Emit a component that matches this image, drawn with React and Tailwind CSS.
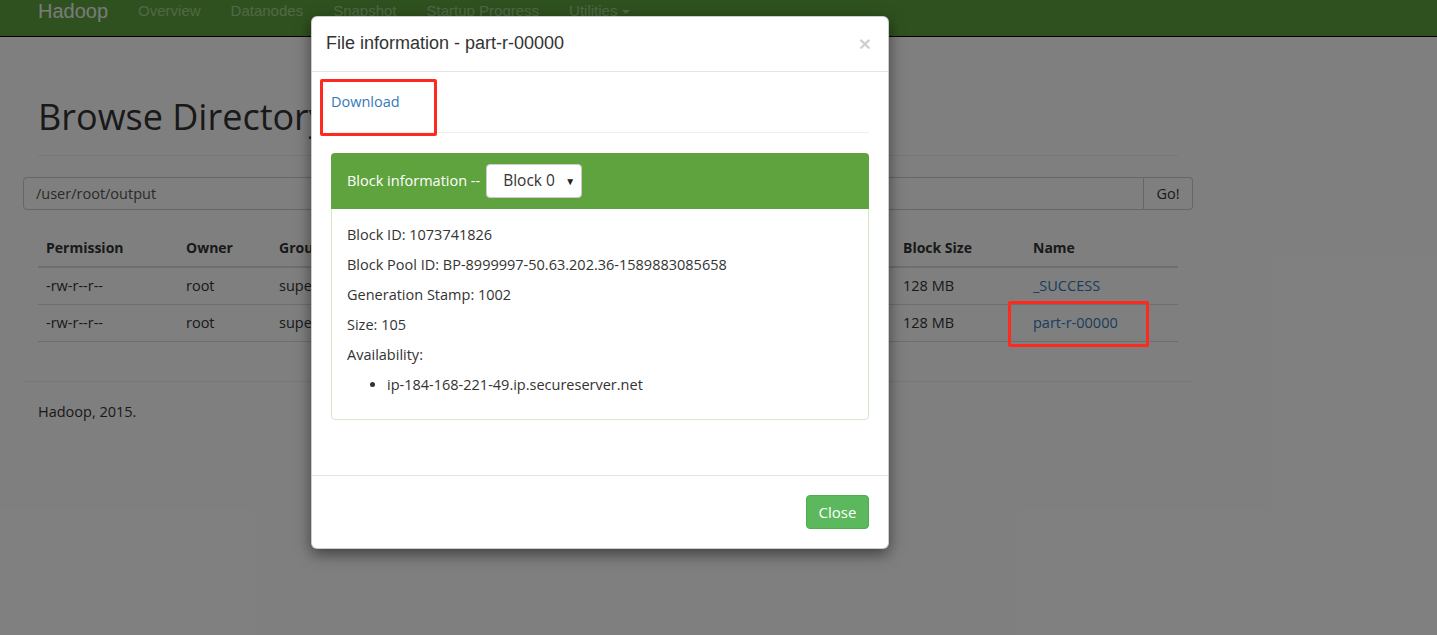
import React from "react";

const rows = [
  { perm: "-rw-r--r--", owner: "root", group: "supergroup", size: "0 B", mod: "May 19 18:27", rep: "1", bs: "128 MB", name: "_SUCCESS" },
  { perm: "-rw-r--r--", owner: "root", group: "supergroup", size: "105 B", mod: "May 19 18:27", rep: "1", bs: "128 MB", name: "part-r-00000" },
];

export default function App() {
  return (
    <div className="relative h-[635px] overflow-hidden bg-white font-['Open_Sans','Noto_Sans',sans-serif] text-[14.5px] text-[#333]">
      {/* Navbar */}
      <nav className="flex h-[37px] items-start border-b border-black bg-[#5fa33e] pl-[38px] font-['Liberation_Sans',Arial,sans-serif]">
        <span className="mr-[15px] text-[20px] leading-[22px] text-[#f4f4f4]">Hadoop</span>
        <ul className="flex text-[15px] leading-[22px] text-[#a0d08a]">
          <li className="px-[15px]">Overview</li>
          <li className="px-[15px]">Datanodes</li>
          <li className="px-[15px]">Snapshot</li>
          <li className="px-[15px]">Startup Progress</li>
          <li className="flex items-center gap-[5px] px-[15px]">
            Utilities
            <span className="mt-[2px] inline-block h-0 w-0 border-x-[4px] border-t-[4px] border-x-transparent border-t-[#a0d08a]" />
          </li>
        </ul>
      </nav>

      {/* Page content */}
      <div className="ml-[8px] w-[1200px] px-[15px]">
        <div className="px-[15px]">
          <h1 className="mt-[60px] border-b border-[#eee] pb-[18px] text-[36px] leading-[40px] text-[#333]">
            Browse Directory
          </h1>
        </div>
        <div className="mt-[21px] flex h-[33px]">
          <div className="flex flex-1 items-center rounded-l-[4px] border border-[#ccc] px-[12px] text-[#555]">
            /user/root/output
          </div>
          <div className="flex w-[49px] items-center justify-center rounded-r-[4px] border border-l-0 border-[#ccc] text-[#333]">
            Go!
          </div>
        </div>
        <div className="mt-[20px] px-[15px]">
          <table className="w-[1140px] table-fixed border-collapse text-left">
            <colgroup>
              <col className="w-[140px]" />
              <col className="w-[93px]" />
              <col className="w-[120px]" />
              <col className="w-[90px]" />
              <col className="w-[260px]" />
              <col className="w-[154px]" />
              <col className="w-[130px]" />
              <col className="w-[153px]" />
            </colgroup>
            <thead>
              <tr className="border-b-2 border-[#ddd]">
                {["Permission", "Owner", "Group", "Size", "Last Modified", "Replication", "Block Size", "Name"].map((h) => (
                  <th key={h} className="px-[8px] py-[8px] text-[14px] font-bold leading-[20px]">{h}</th>
                ))}
              </tr>
            </thead>
            <tbody>
              {rows.map((r) => (
                <tr key={r.name} className="border-b border-[#ddd]">
                  <td className="px-[8px] py-[8px] leading-[20px]">{r.perm}</td>
                  <td className="px-[8px] py-[8px] leading-[20px]">{r.owner}</td>
                  <td className="px-[8px] py-[8px] leading-[20px]">{r.group}</td>
                  <td className="px-[8px] py-[8px] leading-[20px]">{r.size}</td>
                  <td className="px-[8px] py-[8px] leading-[20px]">{r.mod}</td>
                  <td className="px-[8px] py-[8px] leading-[20px]">{r.rep}</td>
                  <td className="px-[8px] py-[8px] leading-[20px]">{r.bs}</td>
                  <td className="px-[8px] py-[8px] leading-[20px] text-[#337ab7]">{r.name}</td>
                </tr>
              ))}
            </tbody>
          </table>
        </div>
        <hr className="mt-[39px] border-t border-[#eee]" />
        <p className="mt-[20px] px-[15px] leading-[20px]">Hadoop, 2015.</p>
      </div>

      {/* Backdrop */}
      <div className="absolute inset-0 bg-black/50" />

      {/* Annotation around table link */}
      <div className="absolute left-[1008px] top-[301px] h-[46px] w-[141px] rounded-[2px] border-[3px] border-[#ff2a1f]" />

      {/* Modal */}
      <div className="absolute left-[311px] top-[16px] w-[578px] rounded-[6px] border border-black/20 bg-white shadow-[0_5px_15px_rgba(0,0,0,0.5)]">
        <div className="flex items-center justify-between border-b border-[#e5e5e5] px-[14px] pb-[15px] pt-[14px]">
          <h4 className="font-['Liberation_Sans',Arial,sans-serif] text-[18px] leading-[25px] text-[#333]">
            File information - part-r-00000
          </h4>
          <span className="mr-[3px] font-['Liberation_Sans',Arial,sans-serif] text-[21px] font-bold leading-[21px] text-black/20">×</span>
        </div>
        <div className="px-[19px] pt-[20px]">
          <div className="leading-[20px] text-[#337ab7]">Download</div>
          <hr className="mb-[20px] mt-[20px] border-t border-[#eee]" />
          <div className="mb-[55px] rounded-[4px] border border-[#d6e9c6]">
            <div className="-mx-px -mt-px flex h-[56px] items-center gap-[6px] rounded-t-[4px] bg-[#5fa33e] px-[16px] text-[14.5px] text-white">
              <span>Block information --</span>
              <div className="flex h-[34px] w-[96px] items-center justify-between rounded-[4px] border border-[#ccc] bg-white pl-[16px] pr-[6px] text-[15.5px] text-[#333]">
                <span>Block 0</span>
                <span className="text-[10px] text-[#222]">▼</span>
              </div>
            </div>
            <div className="px-[15px] pb-[15px] pt-[16px]">
              <p className="mb-[10px] leading-[20px]">Block ID: 1073741826</p>
              <p className="mb-[10px] leading-[20px]">Block Pool ID: BP-8999997-50.63.202.36-1589883085658</p>
              <p className="mb-[10px] leading-[20px]">Generation Stamp: 1002</p>
              <p className="mb-[10px] leading-[20px]">Size: 105</p>
              <p className="mb-[10px] leading-[20px]">Availability:</p>
              <ul className="mb-[9px] list-disc pl-[40px] leading-[20px]">
                <li>ip-184-168-221-49.ip.secureserver.net</li>
              </ul>
            </div>
          </div>
        </div>
        <div className="flex justify-end border-t border-[#e5e5e5] px-[19px] py-[19px]">
          <button className="h-[34px] w-[63px] rounded-[4px] border border-[#4cae4c] bg-[#5cb85c] text-[15px] text-white">
            Close
          </button>
        </div>
      </div>

      {/* Annotation around Download */}
      <div className="absolute left-[320px] top-[79px] h-[57px] w-[117px] rounded-[2px] border-[3px] border-[#ff2a1f]" />
    </div>
  );
}
